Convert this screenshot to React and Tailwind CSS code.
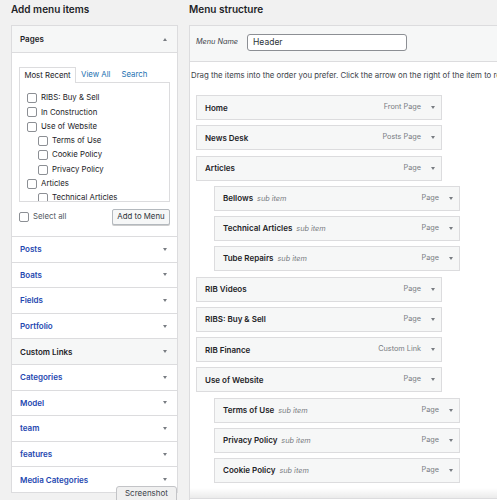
import React from 'react';

const pageOptions = [
  { label: 'RIBS: Buy & Sell', depth: 0 },
  { label: 'In Construction', depth: 0 },
  { label: 'Use of Website', depth: 0 },
  { label: 'Terms of Use', depth: 1 },
  { label: 'Cookie Policy', depth: 1 },
  { label: 'Privacy Policy', depth: 1 },
  { label: 'Articles', depth: 0 },
  { label: 'Technical Articles', depth: 1 },
];

const sections = [
  { title: 'Posts' },
  { title: 'Boats' },
  { title: 'Fields' },
  { title: 'Portfolio' },
  { title: 'Custom Links', active: true },
  { title: 'Categories' },
  { title: 'Model' },
  { title: 'team' },
  { title: 'features' },
  { title: 'Media Categories' },
];

const menuItems = [
  { title: 'Home', type: 'Front Page' },
  { title: 'News Desk', type: 'Posts Page' },
  { title: 'Articles', type: 'Page' },
  { title: 'Bellows', type: 'Page', sub: true },
  { title: 'Technical Articles', type: 'Page', sub: true },
  { title: 'Tube Repairs', type: 'Page', sub: true },
  { title: 'RIB Videos', type: 'Page' },
  { title: 'RIBS: Buy & Sell', type: 'Page' },
  { title: 'RIB Finance', type: 'Custom Link' },
  { title: 'Use of Website', type: 'Page' },
  { title: 'Terms of Use', type: 'Page', sub: true },
  { title: 'Privacy Policy', type: 'Page', sub: true },
  { title: 'Cookie Policy', type: 'Page', sub: true },
];

// small caret used by accordions and menu items
function Caret({ up = false }) {
  return up ? (
    <span className="block w-0 h-0 border-x-[2.5px] border-x-transparent border-b-[3px] border-b-[#787c82]" />
  ) : (
    <span className="block w-0 h-0 border-x-[2.5px] border-x-transparent border-t-[3px] border-t-[#787c82]" />
  );
}

function Checkbox() {
  return <span className="block w-[10px] h-[10px] shrink-0 rounded-[2px] border border-[#8c8f94] bg-white" />;
}

function AddMenuItems() {
  return (
    <div className="w-[167px] shrink-0">
      <h2 className="h-[25px] leading-[19px] text-[10px] font-semibold text-[#1d2327]">Add menu items</h2>
      <div className="border border-[#dcdcde] bg-white">
        {/* Pages accordion (open) */}
        <div className="h-[27px] flex items-center justify-between pl-[8px] pr-[10px] bg-[#f6f7f7] border-b border-[#dcdcde]">
          <span className="text-[8px] font-semibold text-[#1d2327]">Pages</span>
          <Caret up />
        </div>
        <div className="pt-[14px] px-[7px] pb-[11px]">
          <div className="flex items-end h-[15px] text-[7.8px]">
            <div className="w-[57px] h-[16px] -mb-px relative z-10 flex items-center justify-center border border-b-0 border-[#dcdcde] bg-white text-[#1d2327]">
              Most Recent
            </div>
            <span className="ml-[5px] h-[15px] leading-[15px] text-[#2271b1]">View All</span>
            <span className="ml-[11px] h-[15px] leading-[15px] text-[#2271b1]">Search</span>
          </div>
          <div className="h-[120px] overflow-hidden border border-[#dcdcde] pt-[8px] pl-[7px]">
            {pageOptions.map((p) => (
              <div
                key={p.label}
                className={`h-[14.3px] flex items-center gap-[4px] text-[7.8px] text-[#1d2327] ${p.depth ? 'pl-[11px]' : ''}`}
              >
                <Checkbox />
                <span>{p.label}</span>
              </div>
            ))}
          </div>
          <div className="mt-[7px] h-[16px] flex items-center justify-between">
            <label className="flex items-center gap-[4px] text-[7.8px] text-[#50575e]">
              <Checkbox />
              Select all
            </label>
            <button className="w-[58px] h-[16px] rounded-[2px] border border-[#b4b9be] bg-[#f6f7f7] text-[7.8px] text-[#2c3338] shadow-[0_1px_0_#ccc]">
              Add to Menu
            </button>
          </div>
        </div>
        {sections.map((s) => (
          <div
            key={s.title}
            className={`h-[25.6px] flex items-center justify-between pl-[8px] pr-[10px] border-t border-[#dcdcde] ${
              s.active ? 'bg-[#f6f7f7]' : 'bg-white'
            }`}
          >
            <span className={`text-[8px] font-semibold ${s.active ? 'text-[#1d2327]' : 'text-[#2447b0]'}`}>{s.title}</span>
            <Caret />
          </div>
        ))}
      </div>
    </div>
  );
}

function MenuStructure() {
  return (
    <div className="flex-1 min-w-0 overflow-hidden">
      <h2 className="h-[25px] leading-[19px] text-[10px] font-semibold text-[#1d2327]">Menu structure</h2>
      <div className="w-[400px] border border-[#dcdcde] bg-white">
        <div className="h-[36px] flex items-center gap-[9px] pl-[6px] pb-[2px] bg-[#f6f7f7] border-b border-[#dcdcde]">
          <span className="text-[7.3px] italic text-[#3c434a]">Menu Name</span>
          <div className="w-[160px] h-[17px] rounded-[3px] border border-[#8c8f94] bg-white flex items-center pl-[5px] text-[8.5px] text-[#2c3338]">
            Header
          </div>
        </div>
        <p className="pt-[7px] pl-[1px] leading-[12px] text-[7.8px] text-[#3c434a] whitespace-nowrap">
          Drag the items into the order you prefer. Click the arrow on the right of the item to reveal additional configuration options.
        </p>
        <div className="mt-[14px] pl-[6px] flex flex-col gap-[5.25px]">
          {menuItems.map((m) => (
            <div
              key={m.title}
              className={`w-[246px] h-[25px] flex items-center justify-between pl-[8px] pr-[6px] border border-[#dcdcde] bg-[#f6f7f7] ${
                m.sub ? 'ml-[18px]' : ''
              }`}
            >
              <div className="flex items-baseline gap-[4px]">
                <span className="text-[8px] font-semibold text-[#1d2327]">{m.title}</span>
                {m.sub && <span className="text-[7.3px] italic text-[#787c82]">sub item</span>}
              </div>
              <div className="flex items-center gap-[10px]">
                <span className="text-[7.3px] text-[#787c82]">{m.type}</span>
                <Caret />
              </div>
            </div>
          ))}
        </div>
        <div className="mt-[5px] h-[10px] bg-gradient-to-b from-white to-[#ebebeb]" />
        <div className="h-[20px] border-t border-[#dcdcde] bg-white" />
      </div>
    </div>
  );
}

export default function App() {
  return (
    <div className="relative w-[497px] h-[500px] overflow-hidden bg-[#f1f1f1] flex gap-[11px] pl-[11px] font-['Inter',sans-serif]">
      <AddMenuItems />
      <MenuStructure />
      <div className="absolute left-[116px] top-[486px] w-[61px] h-[16px] rounded-t-[3px] border border-[#c3c4c7] bg-[#f0f0f0] text-center text-[8px] leading-[13px] text-[#3c434a]">
        Screenshot
      </div>
    </div>
  );
}
